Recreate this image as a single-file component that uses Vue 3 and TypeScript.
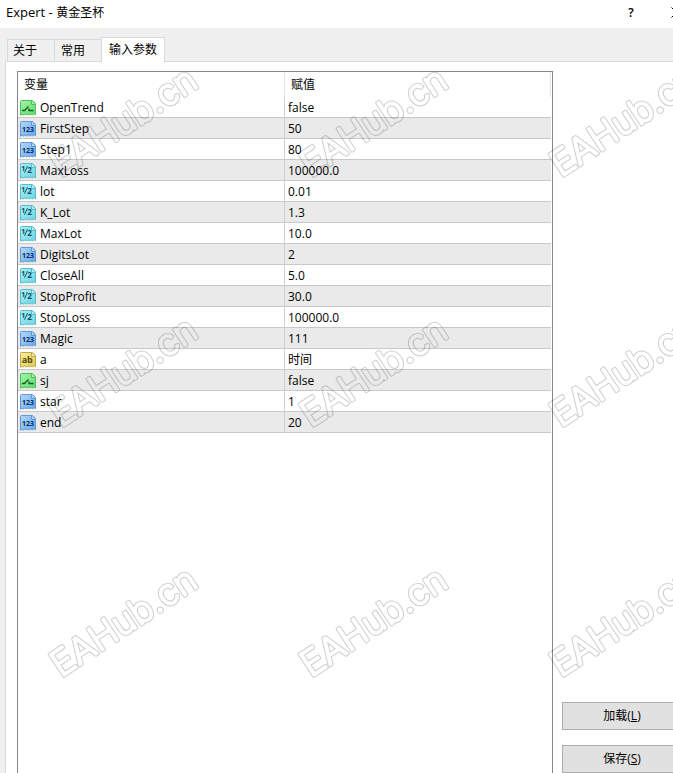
<script setup lang="ts">
import { ref } from 'vue'

type Kind = 'bool' | 'int' | 'double' | 'string'

interface Param {
  name: string
  value: string
  kind: Kind
}

const tabs = ['关于', '常用', '输入参数']
const active = ref(2)

const params: Param[] = [
  { name: 'OpenTrend', value: 'false', kind: 'bool' },
  { name: 'FirstStep', value: '50', kind: 'int' },
  { name: 'Step1', value: '80', kind: 'int' },
  { name: 'MaxLoss', value: '100000.0', kind: 'double' },
  { name: 'lot', value: '0.01', kind: 'double' },
  { name: 'K_Lot', value: '1.3', kind: 'double' },
  { name: 'MaxLot', value: '10.0', kind: 'double' },
  { name: 'DigitsLot', value: '2', kind: 'int' },
  { name: 'CloseAll', value: '5.0', kind: 'double' },
  { name: 'StopProfit', value: '30.0', kind: 'double' },
  { name: 'StopLoss', value: '100000.0', kind: 'double' },
  { name: 'Magic', value: '111', kind: 'int' },
  { name: 'a', value: '时间', kind: 'string' },
  { name: 'sj', value: 'false', kind: 'bool' },
  { name: 'star', value: '1', kind: 'int' },
  { name: 'end', value: '20', kind: 'int' },
]

const gradients: { id: Kind; from: string; to: string }[] = [
  { id: 'bool', from: '#a4f3a8', to: '#5fdc6c' },
  { id: 'int', from: '#b4d9fc', to: '#64a5ea' },
  { id: 'double', from: '#a9f0f7', to: '#6fd3e2' },
  { id: 'string', from: '#f9efa4', to: '#dfc850' },
]
</script>

<template>
  <div class="viewport">
    <div class="dialog">
      <header class="titlebar">
        <h1 class="title">Expert - <span class="cjk">黄金圣杯</span></h1>
        <button class="sys help" type="button">?</button>
        <button class="sys" type="button" aria-label="关闭">
          <svg width="11" height="11" viewBox="0 0 11 11"><path d="M.5.5l10 10M10.5.5l-10 10" stroke="#000" fill="none" /></svg>
        </button>
      </header>

      <nav class="tabs" role="tablist">
        <button
          v-for="(tab, i) in tabs"
          :key="tab"
          class="tab"
          :class="{ active: i === active }"
          type="button"
          role="tab"
          :aria-selected="i === active"
          @click="active = i"
        >{{ tab }}</button>
      </nav>

      <main class="page">
        <div class="list">
          <table class="grid">
            <thead>
              <tr>
                <th class="name-col">变量</th>
                <th>赋值</th>
              </tr>
            </thead>
            <tbody>
              <tr v-for="p in params" :key="p.name">
                <td>
                  <div class="name">
                    <svg class="icon" :class="p.kind" width="16" height="16" viewBox="0 0 16 16" aria-hidden="true">
                      <path
                        class="sheet"
                        :fill="`url(#${p.kind})`"
                        d="M1.5.5H12.5L15.5 3.5V15L14 13.5 12.5 15.2 11 13.7 9.5 15.2 8 13.7 6.5 15.2 5 13.7 3.5 15.2 2 14 .5 15.3V1.5Q.5.5 1.5.5Z"
                      />
                      <path class="fold" d="M11.5.8V4.5H15.2" />
                      <path v-if="p.kind === 'bool'" class="mark" d="M2 10.5H4.5L8.5 6.5M9 8.5V10.5H13.5" />
                      <text v-else-if="p.kind === 'int'" class="label" x="8" y="11" font-size="7">123</text>
                      <g v-else-if="p.kind === 'double'">
                        <text class="label" x="3.2" y="8.2" font-size="7">1</text>
                        <path class="slash" d="M4.5 9.8L7.5 3" />
                        <text class="label" x="9.6" y="10.4" font-size="8">2</text>
                      </g>
                      <text v-else class="label" x="7.2" y="11" font-size="9">ab</text>
                    </svg>
                    <span>{{ p.name }}</span>
                  </div>
                </td>
                <td>{{ p.value }}</td>
              </tr>
            </tbody>
          </table>
        </div>
        <aside class="actions">
          <button class="btn" type="button">加载(<u>L</u>)</button>
          <button class="btn" type="button">保存(<u>S</u>)</button>
        </aside>
      </main>
    </div>

    <svg class="watermark" width="100%" height="100%" aria-hidden="true">
      <defs>
        <linearGradient v-for="g in gradients" :id="g.id" :key="g.id" x1="0" y1="0" x2="1" y2="1">
          <stop offset="0" :stop-color="g.from" />
          <stop offset="1" :stop-color="g.to" />
        </linearGradient>
        <mask id="outline" maskUnits="userSpaceOnUse" x="0" y="0" width="250" height="250">
          <g class="mark-text" transform="translate(61 178) rotate(-33.5)">
            <text fill="#fff" stroke="#fff" stroke-width="3.6">EAHub.cn</text>
            <text fill="#000" stroke="#000" stroke-width="1.6">EAHub.cn</text>
          </g>
        </mask>
        <pattern id="tile" width="250" height="250" patternUnits="userSpaceOnUse">
          <rect width="250" height="250" fill="#000" fill-opacity=".19" mask="url(#outline)" />
        </pattern>
      </defs>
      <rect width="100%" height="100%" fill="url(#tile)" />
    </svg>
  </div>
</template>

<style>
body {
  margin: 0;
}
</style>

<style scoped>
.viewport {
  position: relative;
  overflow: hidden;
  min-height: 100vh;
  display: flex;
  font: 12px/18px "Open Sans", "Noto Sans CJK SC", sans-serif;
  color: #000;
  background: #fff;
}
.dialog {
  flex: 1 0 auto;
  width: calc(100% + 9px);
  margin-right: -9px;
  display: flex;
  flex-direction: column;
  background: #f0f0f0;
}
button {
  font: inherit;
  color: inherit;
  padding: 0;
}
.titlebar {
  display: flex;
  align-items: center;
  height: 28px;
  padding: 0 0 3px 6px;
  box-sizing: border-box;
  background: #fff;
}
.title {
  flex: 1;
  margin: 0;
  font-size: 13px;
  font-weight: 400;
}
.cjk {
  font-size: 12px;
}
.sys {
  width: 12px;
  display: flex;
  justify-content: center;
  border: 0;
  background: none;
}
.help {
  margin-right: 33px;
  font-weight: 600;
}
.tabs {
  display: flex;
  align-items: flex-end;
  height: 34px;
  padding-left: 2px;
  box-sizing: border-box;
  box-shadow: inset 0 -1px #d9d9d9;
  margin-left: 5px;
}
.tab {
  height: 23px;
  padding: 0 17px 0 5px;
  box-sizing: border-box;
  border: 1px solid #d9d9d9;
  border-right: 0;
  background: #f0f0f0;
}
.tab + .tab {
  padding: 0 16px 0 6px;
}
.tab + .tab.active {
  height: 25px;
  padding: 0 7px;
  border-right: 1px solid #d9d9d9;
  border-bottom: 0;
  background: #fff;
}
.page {
  flex: 1;
  display: flex;
  gap: 9px;
  margin-left: 5px;
  padding: 9px 0 0 11px;
  border-left: 1px solid #dcdcdc;
  background: #fff;
}
.list {
  flex: 1;
  padding-right: 1px;
  border: 1px solid #828790;
  border-bottom: 0;
}
.grid {
  width: 100%;
  table-layout: fixed;
  border-collapse: separate;
  border-spacing: 0;
}
th,
td {
  box-sizing: border-box;
  padding: 2px 0 0 3px;
  text-align: left;
  font-weight: 400;
}
th {
  height: 25px;
  padding: 0 0 0 6px;
  border-right: 1px solid #e5e5e5;
}
.name-col {
  width: 267px;
}
td {
  height: 21px;
  border-bottom: 1px solid #c8c8c8;
}
td:first-child {
  padding-left: 2px;
  border-right: 1px solid #d0d0d0;
}
tbody tr:nth-child(even) {
  background: #eaeaea;
}
.name {
  display: flex;
  align-items: center;
  gap: 4px;
}
.icon {
  display: block;
}
.sheet {
  stroke-width: 1;
}
.fold {
  fill: #fff;
  fill-opacity: .35;
  stroke-width: 1;
}
.mark {
  fill: none;
  stroke-width: 1.3;
}
.slash {
  fill: none;
  stroke: #0b4f5c;
  stroke-width: .9;
}
.label {
  font-family: "Open Sans", sans-serif;
  font-weight: 700;
  text-anchor: middle;
}
.bool .sheet, .bool .fold { stroke: #4fbd5c; }
.bool .mark { stroke: #105c1c; }
.int .sheet, .int .fold { stroke: #6098d4; }
.int .label { fill: #0c2d5c; }
.double .sheet, .double .fold { stroke: #58bccb; }
.double .label { fill: #0b4f5c; }
.string .sheet, .string .fold { stroke: #bda846; }
.string .label { fill: #574a05; }
.actions {
  width: 120px;
  display: flex;
  flex-direction: column;
  justify-content: flex-end;
  gap: 15px;
}
.btn {
  height: 28px;
  border: 1px solid #adadad;
  background: #e1e1e1;
}
.watermark {
  position: absolute;
  inset: 0;
  pointer-events: none;
}
.mark-text {
  font-family: Inter, "Liberation Sans", sans-serif;
  font-weight: 300;
  font-size: 36px;
  stroke-linejoin: round;
}
</style>
